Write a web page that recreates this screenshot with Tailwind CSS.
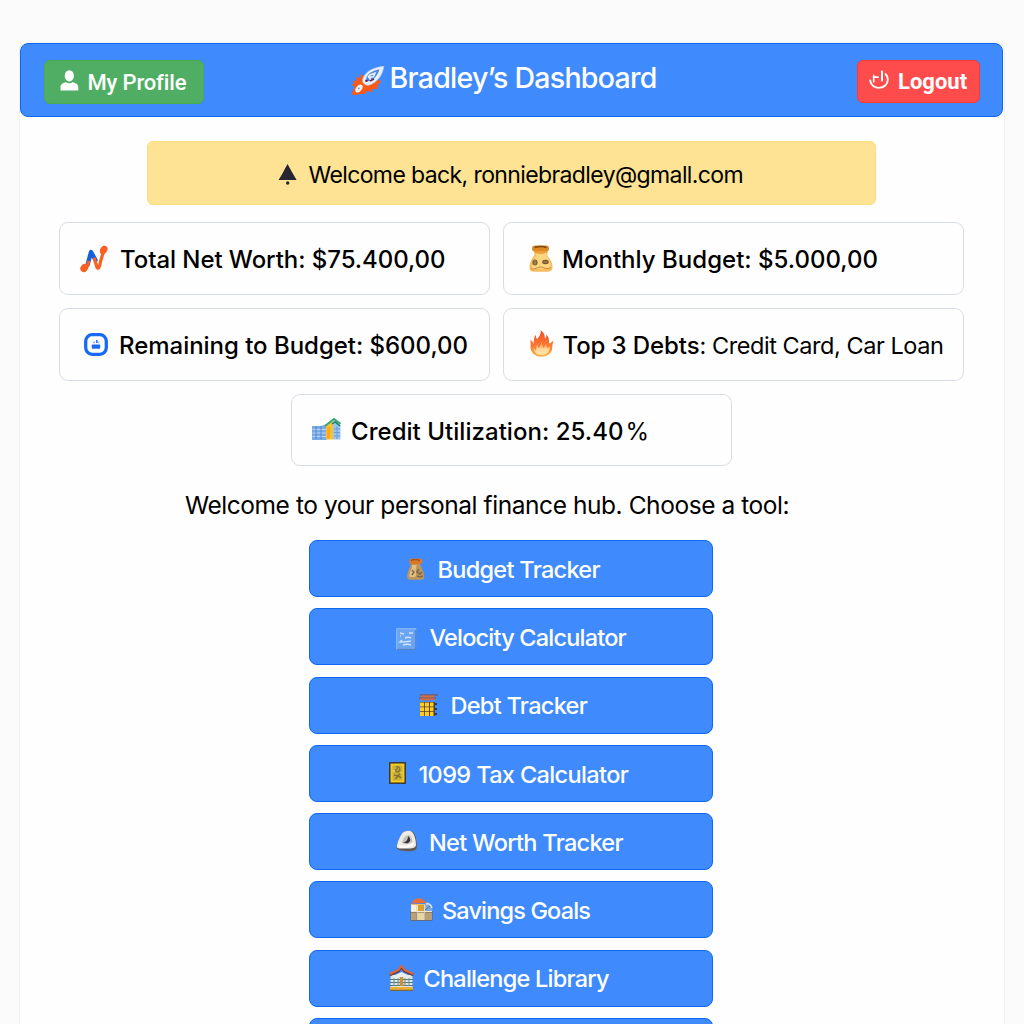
<!DOCTYPE html>
<html lang="en">
<head>
<meta charset="utf-8">
<title>Bradley’s Dashboard</title>
<script src="https://cdn.jsdelivr.net/npm/@tailwindcss/browser@4"></script>
</head>
<body class="h-[1024px] overflow-hidden bg-[#fbfbfb] pt-[43px] pl-5 font-['Inter',sans-serif] text-black">
<div class="h-[981px] w-[983.5px] overflow-hidden rounded-t-lg bg-[#fefefe] shadow-[0_0_2px_rgba(0,0,0,0.14)]">

  <header class="flex h-[74px] w-[983px] items-center rounded-lg border border-[#0f68f5] bg-[#3f8bfd] pr-[22px] pl-[23px] text-white">
    <button class="mt-1 flex h-11 w-40 items-center gap-[9px] rounded-md border border-[#47ad4d] bg-[#4fae64] pl-[14.500px] font-['Roboto',sans-serif] text-[22px] font-medium tracking-[-0.15px] whitespace-nowrap">
      <svg class="mb-1 h-[21px] w-[19px] shrink-0" viewBox="0 0 19 21"><ellipse cx="9.3" cy="5.8" rx="4.6" ry="5.6" fill="#fff"/><path d="M.5 20.500v-3.200C.5 14 3.500 12.700 6 12.300c2 1.300 4.600 1.300 6.600 0 2.500.4 5.700 1.700 5.700 5v3.200z" fill="#fff"/></svg>
      <span>My Profile</span>
    </button>
    <h1 class="mb-[3px] ml-[146.500px] flex items-center gap-[5px] text-[28.5px] font-[450] tracking-[-0.7px] whitespace-nowrap">
      <svg class="mt-1 h-[30px] w-[34px] shrink-0" viewBox="0 0 34 30"><path d="m10 8 3 2 14 4 3 1-2 3-1 1-1 4-4 0-1 3-5-1-2 3-5 0-4 1-4.500-.5L2 24l2-3-3-2 2-2-1-2 4-.5L5 11l4 1z" fill="#fa5a16"/><path d="M32.800.3c-1 7-4 12-8.500 15.500-3 2.300-6.500 4-9 3.200-3-.9-4.600-4-3-7.500C15.300 5 23 1.500 32.800.3z" fill="#e9f2ff" stroke="#b7cdea" stroke-width=".8"/><path d="M28.500 3.300c-5 1-10 3-12.500 7-1.300 2.500-.6 4.700 1.500 5 4-.3 9-5 11-12z" fill="#5186df"/><path d="m17 11 2-2 5-2-1.500 3.500-4.500 1 2 2.500" fill="none" stroke="#e8f1ff" stroke-width="1.500"/><circle cx="15.500" cy="14.800" r="1.300" fill="#58214c"/><path d="m19 15 4-2" stroke="#5c2755" stroke-width="1.500"/><ellipse cx="8" cy="22.500" rx="2.800" ry="4.500" transform="rotate(40 8 22.500)" fill="#edf1fa"/><circle cx="7.800" cy="22.300" r=".9" fill="#8095c5"/></svg>
      <span>Bradley’s Dashboard</span>
    </h1>
    <button class="mt-[3px] ml-auto flex h-[43.500px] w-[123.500px] items-center gap-[9px] rounded-md border border-[#f93a2e] bg-[#fe4b4c] pl-[11.500px] font-['Roboto',sans-serif] text-[22px] font-bold whitespace-nowrap">
      <svg class="mb-1 h-5 w-5 shrink-0" viewBox="0 0 20 20" fill="none" stroke="#fff" stroke-linecap="round"><path d="M1.200 10.500c.7 4.800 4.600 7.400 8.700 7.400 5 0 8.900-3.600 8.900-8.200 0-2.600-1-4.500-2.300-5.700" stroke-width="1.900"/><path d="M13 1.500v9" stroke-width="2"/><path d="M4.700 11.800V5.300M5 7.200h4" stroke-width="1.700"/></svg>
      <span>Logout</span>
    </button>
  </header>

  <main>
    <div class="mt-6 ml-[127px] flex h-16 w-[729px] items-center gap-3 rounded-md border border-[#fcdc7c] bg-[#fde393] pt-[3px] pl-[129.500px] text-[23px] tracking-[-0.61px] whitespace-nowrap">
      <svg class="h-[21px] w-[19px] shrink-0" viewBox="0 0 19 21"><path d="M9.600 0c2 4 5.500 10 9 16H.5C4 11 7 4 9.600 0z" fill="#272632"/><circle cx="9.700" cy="19" r="1.700" fill="#272632"/></svg>
      <span class="pt-px">Welcome back, ronniebradley@gmall.com</span>
    </div>

    <section class="mt-[17px] ml-[39px] grid w-[905px] grid-cols-[431px_461px] gap-x-[13px] gap-y-[13px] text-2xl font-medium whitespace-nowrap">
      <div class="flex h-[73px] items-center gap-3 rounded-[9px] border border-[#d9dee5] pl-5">
        <svg class="h-7 w-7 shrink-0" viewBox="0 0 28 28" fill="none" stroke-linecap="round" stroke-linejoin="round"><path d="M7.500 20 11 7 15.500 15" stroke="#155fdc" stroke-width="4.300"/><path d="M4 23c4-1 4-3 4.500-6M14.500 14l2.500 8.500c1.500 2.500 3-2 3.500-6L24 5" stroke="#fc5f20" stroke-width="3.200"/><ellipse cx="4.300" cy="23" rx="3.700" ry="4.300" transform="rotate(35 4.300 23)" fill="#fc5f20"/><ellipse cx="23.700" cy="5" rx="3.500" ry="4.700" transform="rotate(35 23.700 5)" fill="#fc5f20"/></svg>
        <span class="pt-0.5 tracking-[-0.06px]">Total Net Worth: $75.400,00</span>
      </div>
      <div class="flex h-[73px] items-center gap-[9.500px] rounded-[9px] border border-[#d9dee5] pl-[24.500px]">
        <svg class="h-[27px] w-6 shrink-0" viewBox="0 0 24 27"><path d="M4.500 5c2 3 1 5-1 8C1 17 .3 20 .5 23c.2 3 2.500 3.700 5 3.700h13c3 0 4.800-1 5-3.700.2-4-1-7-3.500-10-2-3-2.500-5-.5-8z" fill="#f3bd60"/><path d="M7 8c1 4-4 7-4 13 0 3 1 3 3 3h12c3 0 4-2 3.500-5-.5-4-4-7-4-11z" fill="#fad582"/><rect x="3" y=".6" width="17" height="5.800" rx="2.900" fill="#dc8a21"/><path d="M5.500 2.500c4-1.200 9-1.200 12 0" stroke="#7d4612" stroke-width="1.500" fill="none"/><path d="M5 6.500c4 2 9 2 13 0" stroke="#f09c32" stroke-width="1.500" fill="none"/><ellipse cx="6" cy="17.500" rx="2.600" ry="2.900" fill="#836033"/><ellipse cx="16.500" cy="17" rx="3.300" ry="2.200" fill="#76542b"/><path d="M6 15.500v4m8.500-2.500h4" stroke="#c59a56"/><path d="M2 24c5 1 8-4 13-1 3 1 6 1 7-1" stroke="#d08a36" fill="none"/></svg>
        <span class="pt-0.5 tracking-[0.02px]">Monthly Budget: $5.000,00</span>
      </div>
      <div class="flex h-[73px] items-center gap-[11px] rounded-[9px] border border-[#d9dee5] pl-6">
        <svg class="h-[23px] w-6 shrink-0" viewBox="0 0 24 23"><rect x="1.700" y="1.700" width="20.600" height="19.600" rx="6.500" fill="#fff" stroke="#196af3" stroke-width="3.300"/><rect x="7.800" y="11.500" width="8.400" height="4.200" rx=".8" fill="#196af3"/><path d="M12.800 7v3M9.500 9.500h1M14.500 9.500h.7" stroke="#196af3" stroke-width="1.500"/></svg>
        <span class="pt-0.5 tracking-[-0.03px]">Remaining to Budget: $600,00</span>
      </div>
      <div class="flex h-[73px] items-center gap-[9px] rounded-[9px] border border-[#d9dee5] pl-[25.500px]">
        <svg class="mb-0.5 h-[27px] w-6 shrink-0" viewBox="0 0 24 27"><defs><linearGradient id="flame" x1="0" y1="0" x2="0" y2="1"><stop offset="0" stop-color="#ef4b28"/><stop offset=".6" stop-color="#fb7c35"/><stop offset="1" stop-color="#fcb344"/></linearGradient><linearGradient id="core" x1="0" y1="0" x2="0" y2="1"><stop offset="0" stop-color="#ff8c46"/><stop offset=".6" stop-color="#ffd698"/><stop offset="1" stop-color="#ffe9a8"/></linearGradient></defs><path d="M10.500 0c4 3 4.500 6 4.500 9 1-1.500 1.500-3 1.500-4.500 2 2 3 5 2.500 9 1.500-.5 3-1.500 4.500-3-.3 2-1.200 4-1.200 6.500 0 6-4.500 9.700-11 9.700C5 26.700.5 22.500.5 17c0-3 .5-5-.3-7C2 10.500 3 12 3.200 14 4.500 10 3.500 7 6 5c0 2 .3 3 1 4 2.500-2.500 4.300-5 3.500-9z" fill="url(#flame)"/><path d="M11 11c1.500 3 1 5 2.500 7 1.500-1.500 2-3 2.300-5 .7 2 .5 4 1.500 5 1-.5 2-1 2.700-2 0 6-3 9-8.500 9C6.500 25 4 22 3.500 18c1 1 1.500 2 2.300 2.500 1-2.500.2-4 1.700-6.500.3 2 .5 3.500 1.500 4 1.500-2.500 2.500-4 2-7z" fill="url(#core)"/></svg>
        <span class="pt-0.5"><span class="tracking-[-0.1px]">Top 3 Debts</span><span class="text-[23.500px] font-normal tracking-[-0.45px]">: Credit Card, Car Loan</span></span>
      </div>
      <div class="col-span-2 ml-[232px] flex h-[72px] w-[441px] items-center gap-[10px] rounded-[9px] border border-[#d9dee5] pl-5">
        <svg class="mb-0.5 h-[22px] w-[29px] shrink-0" viewBox="0 0 29 22"><path d="M0 8h9l6-2v16H0z" fill="#79a9e6"/><path d="M.5 11.500H14M.5 15H14M.5 18.500H14" stroke="#b8d6f6"/><path d="M4 8v13M9 8v13" stroke="#5788ca"/><path d="m14 8 7-5v18.500h-7z" fill="#fac12a"/><path d="m15 10 3-1v12h-3z" fill="#fbaa20"/><path d="m21 2 7.500 5v14.500H21z" fill="#9cc6f0"/><path d="M22 11h6m-6 3.500h6m-6 3.500h6M25 8v13" stroke="#6b9edb"/><path d="m13 8 9-7 6.500 5" fill="none" stroke="#37a473" stroke-width="2"/><path d="m20 6 3-2 5 4" stroke="#1c806e" stroke-width="1.500" fill="none"/></svg>
        <span class="pt-[3px] tracking-[0.04px]">Credit Utilization: 25.40<span class="ml-0.5 font-normal">%</span></span>
      </div>
    </section>

    <p class="mt-[23px] ml-[165px] h-8 text-[24.500px] leading-8 tracking-[-0.44px] whitespace-nowrap">Welcome to your personal finance hub. Choose a tool:</p>

    <nav class="mt-[19px] ml-[289px] flex w-[404px] flex-col gap-[11.250px] text-[23.500px] font-[450] whitespace-nowrap text-white [&>a]:flex [&>a]:h-[57px] [&>a]:shrink-0 [&>a]:items-center [&>a]:rounded-lg [&>a]:border [&>a]:border-[#0f68f5] [&>a]:bg-[#3f8bfd] [&>a]:pt-0.5">
      <a class="gap-[12.500px] pl-[97px]">
        <svg class="mb-0.5 h-[22px] w-[18px] shrink-0" viewBox="0 0 18 22"><path d="M4 5c0 4-4 8-3.800 14 .1 2.500 2 2.700 4 2.700h9.500c2.500 0 3.500-.7 3.600-3C17.500 13 13 9 13 5z" fill="#be9659"/><path d="M5 7c1 4-3 6-2.500 12H8c3-4-1-7 2-12z" fill="#e2bf82"/><path d="m5 12 2 2-2 3m7-6-2 3 3 2 2-2m-5 4 3 1 3-1" stroke="#7b684a" stroke-width="1.500" fill="none"/><rect x="2.300" y=".5" width="13" height="5.700" rx="2.300" fill="#da7829"/><path d="M4 2.300c3-.8 6-.8 9 0" stroke="#8b4215" fill="none"/></svg>
        <span class="tracking-[-0.7px]">Budget Tracker</span>
      </a>
      <a class="gap-[13px] pl-[85.500px]">
        <svg class="mt-0.5 h-[22px] w-[21px] shrink-0" viewBox="0 0 21 22"><rect x=".7" y=".7" width="19" height="20.500" fill="#69a5f4" stroke="#90bdf5"/><path d="M1 21.300h18.800V2" stroke="#4777b8" fill="none"/><path d="m4 5 4 1m5-1h4M9 10c2-1 4-1 6 0m-9 2-2 2h4l7-1M7 17c3-1 6-1 8 0M4 8h1" stroke="#d0e3fa" stroke-width="1.400" fill="none"/></svg>
        <span class="tracking-[-0.8px]">Velocity Calculator</span>
      </a>
      <a class="gap-[12.500px] pl-[109px]">
        <svg class="mb-0.5 h-[23px] w-[19px] shrink-0" viewBox="0 0 19 23"><path d="M1 1h18M0 4h17" stroke="#795b65" stroke-width="1.500"/><path d="M2 2.500h13M1 5.300h15" stroke="#d96c38" stroke-width="1.800"/><path d="M1 8h15v14H1z" fill="#554229"/><path d="M1 8.500h4.200v4H1zM6 8.500h4v4H6zM11 8.500h3.500v4H11zM1 13.300h4.200v4H1zm5 0h4v4H6zm5 0h3.500v4H11zM1 18h4.200v4H1zm5 0h4v4H6zm5 0h3.500v4H11z" fill="#ffcc1f"/><path d="M15 10h3m-3 5h3m-3 5h3" stroke="#3b3744" stroke-width="2"/></svg>
        <span class="tracking-[-0.7px]">Debt Tracker</span>
      </a>
      <a class="gap-[12.500px] pl-[79px]">
        <svg class="mb-0.5 h-[22px] w-[17px] shrink-0" viewBox="0 0 17 22"><rect x=".8" y=".8" width="15.400" height="20.400" fill="#f4cd24" stroke="#3d3833" stroke-width="1.500"/><rect x="3.500" y="3.500" width="10" height="15" fill="#cdb034"/><path d="M7 5c4-1 5 3 2 5-3 0-3-3 0-3m-4 6 3 1 4-3M6 17l4-3 2 2" stroke="#83743a" stroke-width="1.400" fill="none"/><path d="M5 8v2m7 0v2" stroke="#f8e781"/></svg>
        <span class="tracking-[-0.63px]">1099 Tax Calculator</span>
      </a>
      <a class="gap-[12px] pl-[86px]">
        <svg class="mb-[3px] h-[22px] w-[21px] shrink-0" viewBox="0 0 21 22"><path d="M7 3C10 .2 14 .2 17 2c3 3 4 10 3.800 15 0 3-3 4.300-8 4.300-5 0-10-.8-12-3C-.5 15 4 7 7 3z" fill="#5f5753"/><path d="M6.500 3C10 0 14 .3 16 2c3 3 4 9 4 13 0 3-5 3.500-9 3.500S1 19 .8 17C1 13 4 6 6.500 3z" fill="#edebe4"/><path d="M6 13c1-5 3-8 7-8 3 1 3 4 3.500 7-3 2-7 3-10.500 1z" fill="#c4c2be"/><path d="M12 6c3 3 3 5 0 7-2 .5-4 0-5-1 3 .5 5-2 5-6z" fill="#343339"/><path d="M3 16c5 2 10 1 15-3" stroke="#fff" stroke-width="2" fill="none"/></svg>
        <span class="tracking-[-0.7px]">Net Worth Tracker</span>
      </a>
      <a class="gap-[9px] pl-[100px]">
        <svg class="mb-0.5 h-[23px] w-[23px] shrink-0" viewBox="0 0 23 23"><path d="m15 5 3-1 4 3 .5 6H15z" fill="#78a8df"/><path d="M16 6c3-1 5 1 6 4" stroke="#d2e1ed" stroke-width="1.500" fill="none"/><path d="M1 6h14v7H1z" fill="#e8bc67"/><path d="M.5 13H22.500v9.700H.5z" fill="#6f604b"/><path d="M1 7h5.500v6H1z" fill="#f5efdf"/><path d="M8 7h6v6H8z" fill="#d6a034"/><path d="M1 14.500h5.500V22H1zm14.500 0H22V22h-6.500z" fill="#b8a178"/><path d="M8 14.500h6V22H8z" fill="#e9d6a3"/><path d="M1 13.500h21M7.300 7v15M14.800 7v15" stroke="#f0e6ce"/><path d="M1 5.500C3 2 6 .3 9 .3s5 2 7 4.700z" fill="#ea6e3c"/><path d="m15 12 5-4" stroke="#4874a8"/></svg>
        <span class="tracking-[-0.85px]">Savings Goals</span>
      </a>
      <a class="gap-[9.500px] pl-[79px]">
        <svg class="mb-[3px] h-[26px] w-[25px] shrink-0" viewBox="0 0 25 26"><path d="M1.500 10h22v15.500h-22z" fill="#dfe5df"/><path d="m4 11 8.500-4 8.500 4v3H4z" fill="#e6efe9"/><path d="M1 14.500h23M1 17.500h23M1 20.500h23" stroke="#547880" stroke-width="1.200"/><path d="M5 13v8m4-8v8m7-8v8m4-8v8" stroke="#718e91"/><path d="M10.700 12h3.600v9h-3.600z" fill="#c89039"/><path d="M1 22h23v3.500H1z" fill="#edae33"/><path d="M1 25.300h23" stroke="#62582f"/><path d="m.8 10 8.700-4L12.500 2l3 4 8.800 4" fill="none" stroke="#613c35" stroke-width="2.500"/><path d="m.8 9 8.700-4L12.500.8l3 4.200L24.300 9" fill="none" stroke="#e66331" stroke-width="2"/></svg>
        <span class="tracking-[-0.76px]">Challenge Library</span>
      </a>
      <a></a>
    </nav>
  </main>
</div>
</body>
</html>
